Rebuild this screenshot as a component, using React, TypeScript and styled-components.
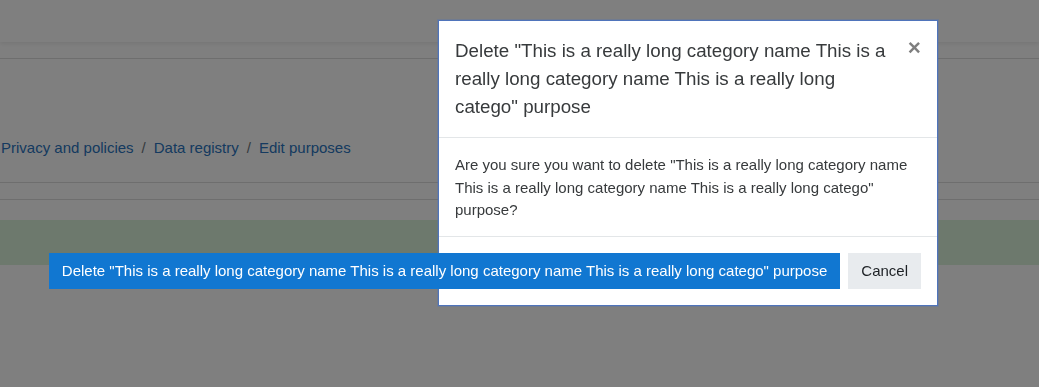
import React from "react";
import styled, { createGlobalStyle } from "styled-components";

const GlobalStyle = createGlobalStyle`
  html, body { margin: 0; padding: 0; background: #fff; }
  body {
    font-family: "Liberation Sans", Arial, Helvetica, sans-serif;
    font-size: 15px;
    line-height: 1.5;
    color: #373a3c;
    overflow: hidden;
  }
  *, *::before, *::after { box-sizing: border-box; }
`;

const Page = styled.div`
  height: 387px;
  background: #fff;
`;

const Navbar = styled.header`
  height: 42px;
  background: #fff;
  box-shadow: 0 2px 4px rgba(0, 0, 0, 0.08);
  position: relative;
`;

const SubBar = styled.div`
  height: 17px;
  border-bottom: 1px solid #dcdcdc;
`;

const Breadcrumb = styled.nav`
  display: flex;
  margin: 78px 0 0;
  padding-left: 1px;
  height: 23px;
`;

const Crumb = styled.a<{ $first?: boolean }>`
  color: #2a74c0;
  text-decoration: none;
  &::before {
    content: ${(p) => (p.$first ? "none" : '"/"')};
    color: #6c757d;
    padding: 0 8px;
  }
`;

const Rule = styled.div<{ $top: number }>`
  margin-top: ${(p) => p.$top}px;
  border-top: 1px solid #dcdcdc;
`;

const Alert = styled.div`
  margin-top: 20px;
  height: 45px;
  background: #dbf2db;
`;

const Backdrop = styled.div`
  position: fixed;
  inset: 0;
  background: rgba(0, 0, 0, 0.5);
`;

const Dialog = styled.div`
  position: absolute;
  top: 20px;
  left: 438px;
  width: 500px;
  background: #fff;
  border: 1px solid #4f74bb;
  box-shadow: 0 0 0 1px rgba(79, 116, 187, 0.3);
  display: flex;
  flex-direction: column;
`;

const Header = styled.div`
  display: flex;
  align-items: flex-start;
  padding: 16px;
  border-bottom: 1px solid #e3e6e8;
`;

const Title = styled.h5`
  margin: 0;
  font-size: 18.75px;
  font-weight: 400;
  line-height: 1.5;
  color: #373a3c;
  flex: 1 1 auto;
  min-width: 0;
`;

const Close = styled.button`
  margin: -16px -16px -16px auto;
  padding: 16px;
  background: transparent;
  border: 0;
  font-family: "Liberation Sans", Arial, sans-serif;
  font-size: 22.5px;
  font-weight: 700;
  line-height: 1;
  color: #000;
  opacity: 0.5;
  text-shadow: 0 1px 0 #fff;
  cursor: pointer;
`;

const Body = styled.div`
  padding: 16px 16px 14px;
  font-size: 15px;
  line-height: 22.5px;
`;

const Footer = styled.div`
  display: flex;
  flex-wrap: nowrap;
  justify-content: flex-end;
  align-items: center;
  padding: 12px;
  border-top: 1px solid #e3e6e8;
`;

const Button = styled.button<{ $primary?: boolean }>`
  flex: 0 0 auto;
  margin: 4px;
  padding: 6px 12px;
  white-space: nowrap;
  font-family: "Liberation Sans", Arial, sans-serif;
  font-size: 15px;
  line-height: 22.5px;
  border-radius: 0;
  border: 1px solid ${(p) => (p.$primary ? "#1177d1" : "#e8ebee")};
  background: ${(p) => (p.$primary ? "#1177d1" : "#e8ebee")};
  color: ${(p) => (p.$primary ? "#fff" : "#1d2125")};
  cursor: pointer;
`;

const NAME =
  "This is a really long category name This is a really long category name This is a really long catego";

export default function App() {
  return (
    <>
      <GlobalStyle />
      <Page>
        <Navbar />
        <SubBar />
        <Breadcrumb>
          <Crumb $first href="#">Privacy and policies</Crumb>
          <Crumb href="#">Data registry</Crumb>
          <Crumb href="#">Edit purposes</Crumb>
        </Breadcrumb>
        <Rule $top={22} />
        <Rule $top={16} />
        <Alert />
      </Page>
      <Backdrop />
      <Dialog role="dialog">
        <Header>
          <Title>Delete "{NAME}" purpose</Title>
          <Close aria-label="Close">×</Close>
        </Header>
        <Body>Are you sure you want to delete "{NAME}" purpose?</Body>
        <Footer>
          <Button $primary>Delete "{NAME}" purpose</Button>
          <Button>Cancel</Button>
        </Footer>
      </Dialog>
    </>
  );
}
